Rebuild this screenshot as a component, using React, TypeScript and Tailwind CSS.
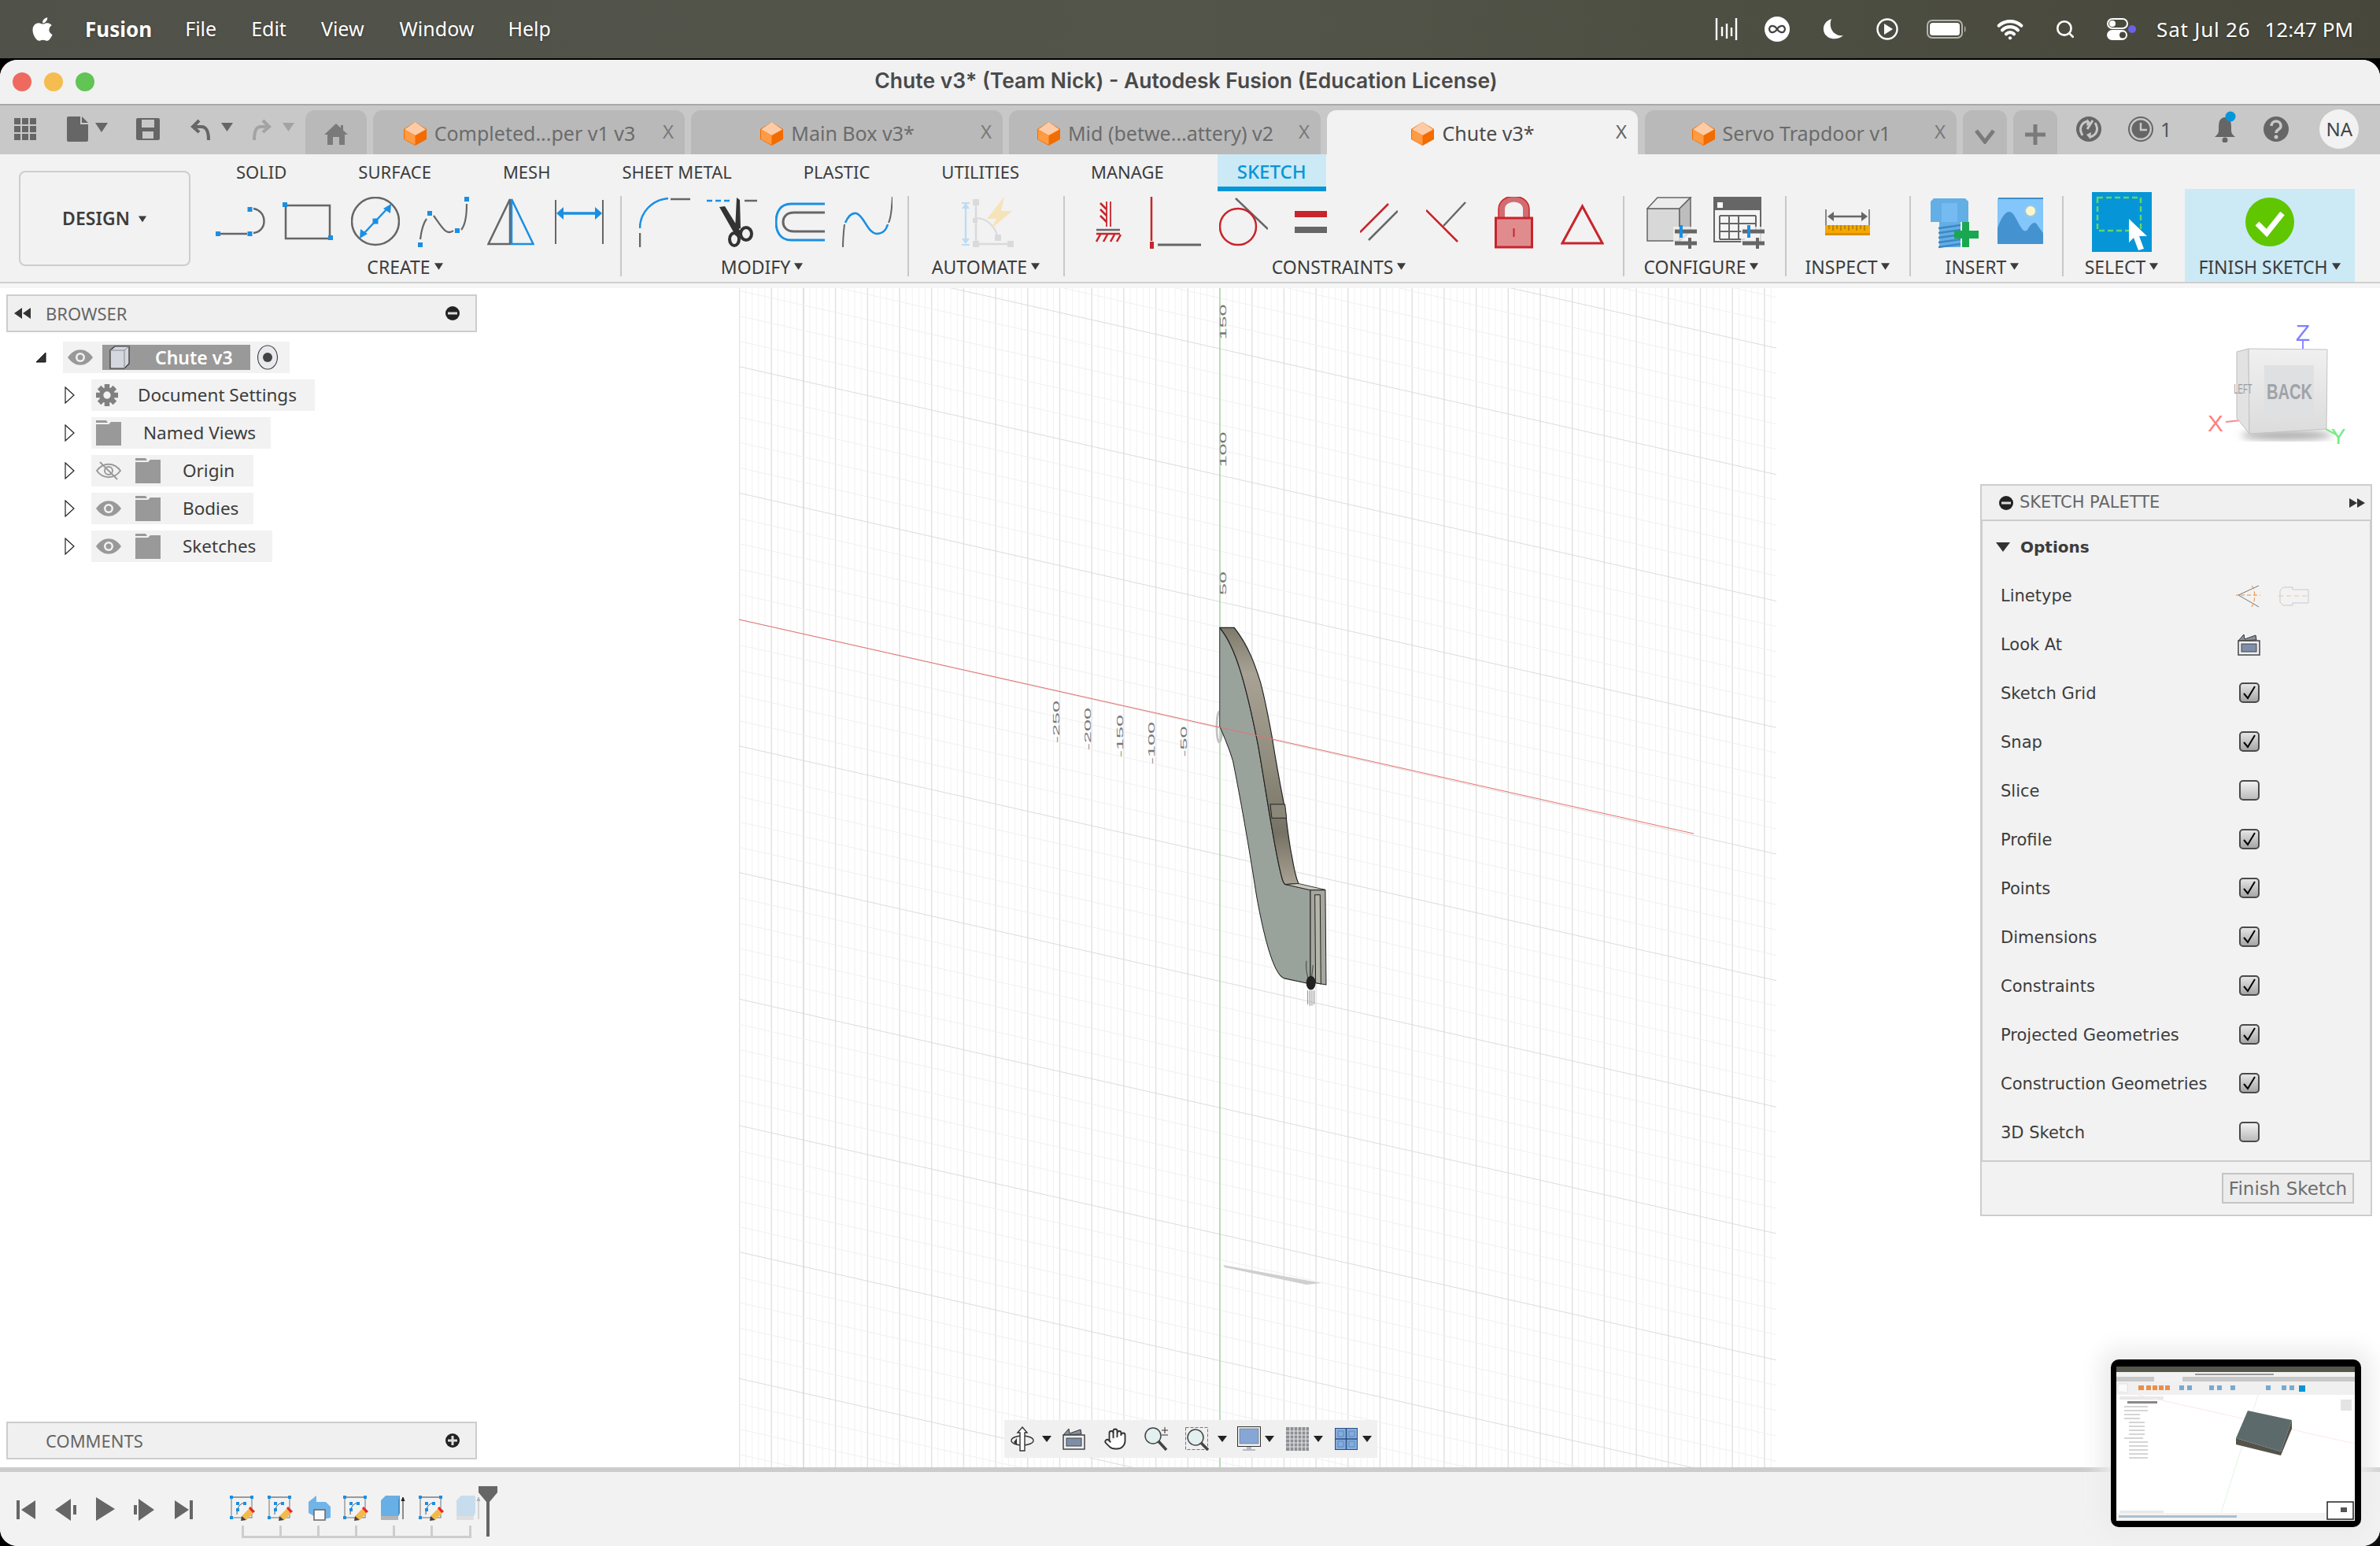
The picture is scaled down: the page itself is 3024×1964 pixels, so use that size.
import { FaApple } from 'react-icons/fa'
import { Hand, Search, Wifi } from 'lucide-react'

const BLUE = '#1a8fe3'
const GRAY = '#666666'
const RED = '#c8242b'

function Tri({ className = '' }: { className?: string }) {
  return (
    <svg width={14} height={12} viewBox="0 0 14 12" className={className}>
      <path d="M1 2H13L7 11Z" fill="#3c3c3c" />
    </svg>
  )
}

function OrangeCube() {
  return (
    <svg width={29} height={30} viewBox="0 0 29 30" className="shrink-0">
      <path d="M14.5 0L29 9V22L14.5 30L0 22V9Z" fill="#f26c00" />
      <path d="M14.5 0L28 9.5L14.5 17L1 9.5Z" fill="#fdcba6" />
      <path d="M1 10L14.5 17V29L1 22Z" fill="#ff9b42" />
    </svg>
  )
}

function Tab({ label, active, offset }: { label: string; active?: boolean; offset: string }) {
  return (
    <div className={`relative flex h-[56px] items-center justify-center gap-[10px] rounded-t-[12px] pr-[24px] pt-[4px] ${active ? 'w-[395px] bg-[#f2f2f2]' : 'w-[396px] bg-[#b9b9b9]'} ${offset}`}>
      <OrangeCube />
      <span className={`whitespace-nowrap text-[25px] ${active ? 'text-[#4a4a4a]' : 'text-[#6b6b6b]'}`}>{label}</span>
      <span className={`absolute right-[14px] top-[12px] text-[24px] leading-[30px] ${active ? 'text-[#666]' : 'text-[#7a7a7a]'}`}>X</span>
    </div>
  )
}

function MenuBar() {
  return (
    <div className="relative flex h-[74px] items-center bg-linear-to-r from-[#50524a] via-[#53554a] to-[#47473b] text-[25px] text-white [text-shadow:0_1px_3px_rgba(0,0,0,0.4)]">
      <FaApple className="ml-[38px] h-[34px] w-[32px]" />
      <span className="ml-[38px] text-[26px] font-bold">Fusion</span>
      <span className="ml-[42px]">File</span>
      <span className="ml-[44px]">Edit</span>
      <span className="ml-[44px]">View</span>
      <span className="ml-[45px]">Window</span>
      <span className="ml-[43px]">Help</span>
      <div className="ml-auto flex items-center text-[26px]">
        <svg width={30} height={30} viewBox="0 0 30 30" fill="none" stroke="#fff" strokeWidth={2.4}>
          <path d="M2 1V29M9 12V24M15 8V27M21 13V24M27 1V29" />
        </svg>
        <div className="ml-[33px] flex h-[32px] w-[32px] items-center justify-center rounded-full bg-white">
          <svg width={24} height={14} viewBox="0 0 24 14" fill="none" stroke="#444" strokeWidth={2.2}>
            <path d="M12 7C9 2 3 1 2 7C3 13 9 12 12 7C15 2 21 1 22 7C21 13 15 12 12 7Z" />
          </svg>
        </div>
        <svg width={29} height={28} viewBox="0 0 29 28" className="ml-[40px]">
          <path d="M13 1C4 4 1 12 4 19C8 27 20 29 28 22C18 24 8 14 13 1Z" fill="#fff" />
        </svg>
        <svg width={28} height={28} viewBox="0 0 28 28" fill="none" className="ml-[41px]">
          <circle cx={14} cy={14} r={12.5} stroke="#fff" strokeWidth={2.4} />
          <path d="M10 7L21 14L10 21Z" fill="#fff" />
        </svg>
        <svg width={51} height={24} viewBox="0 0 51 24" fill="none" className="ml-[36px]">
          <rect x={1} y={1} width={44} height={22} rx={6} stroke="#b4b4ab" strokeWidth={2} />
          <rect x={4} y={4} width={38} height={16} rx={3.5} fill="#fff" />
          <path d="M48 8C50 9 50 15 48 16Z" fill="#b4b4ab" />
        </svg>
        <Wifi className="ml-[37px] h-[34px] w-[36px]" strokeWidth={3} />
        <Search className="ml-[39px] h-[28px] w-[26px]" strokeWidth={2.4} />
        <svg width={37} height={28} viewBox="0 0 37 28" className="ml-[40px]">
          <rect x={1} y={1} width={25} height={12} rx={6} fill="none" stroke="#fff" strokeWidth={2} />
          <circle cx={7} cy={7} r={4} fill="#fff" />
          <rect x={0} y={15} width={26} height={13} rx={6.5} fill="#fff" />
          <circle cx={20} cy={21.5} r={4} fill="#47473b" />
          <circle cx={32} cy={14} r={5} fill="#6a62e8" />
        </svg>
        <span className="ml-[26px] tracking-[0.8px]">Sat Jul 26</span>
        <span className="ml-[18px] mr-[34px]">12:47 PM</span>
      </div>
    </div>
  )
}

function TabBar() {
  return (
    <div className="flex h-[64px] items-end border-t-2 border-[#a9a9a9] bg-[#c8c8c8]">
      <div className="flex h-[56px] w-[388px] shrink-0 items-start pt-[8px]">
        <svg width={28} height={28} viewBox="0 0 28 28" fill={GRAY} className="ml-[18px] mt-[2px]">
          <path d="M0 0H8V8H0ZM10 0H18V8H10ZM20 0H28V8H20ZM0 10H8V18H0ZM10 10H18V18H10ZM20 10H28V18H20ZM0 20H8V28H0ZM10 20H18V28H10ZM20 20H28V28H20Z" />
        </svg>
        <svg width={27} height={32} viewBox="0 0 27 32" fill={GRAY} className="ml-[39px]">
          <path d="M0 2Q0 0 2 0H17V10H27V30Q27 32 25 32H2Q0 32 0 30ZM19 0L27 8H19Z" />
        </svg>
        <svg width={16} height={12} viewBox="0 0 16 12" fill={GRAY} className="ml-[9px] mt-[8px]">
          <path d="M0 0H16L8 12Z" />
        </svg>
        <svg width={30} height={28} viewBox="0 0 30 28" fill={GRAY} className="ml-[36px] mt-[2px]">
          <path d="M2 0H28Q30 0 30 2V26Q30 28 28 28H2Q0 28 0 26V2Q0 0 2 0ZM7 2V12H23V2ZM8 17V26H22V17Z" fillRule="evenodd" />
          <path d="M11 19H19V26H16V21H14V26H11Z" fill="#c8c8c8" />
        </svg>
        <svg width={27} height={30} viewBox="0 0 27 30" fill="none" stroke={GRAY} strokeWidth={4} className="ml-[38px]">
          <path d="M12 5L4 13L12 20M4 13H15Q24 13 24 30" />
        </svg>
        <svg width={15} height={11} viewBox="0 0 15 11" fill={GRAY} className="ml-[13px] mt-[8px]">
          <path d="M0 0H15L7.5 11Z" />
        </svg>
        <svg width={25} height={30} viewBox="0 0 25 30" fill="none" stroke="#a3a3a3" strokeWidth={4} className="ml-[24px]">
          <path d="M14 5L22 13L14 20M22 13H11Q3 13 3 30" />
        </svg>
        <svg width={15} height={11} viewBox="0 0 15 11" fill="#a3a3a3" className="ml-[14px] mt-[8px]">
          <path d="M0 0H15L7.5 11Z" />
        </svg>
      </div>
      <div className="relative flex h-[56px] w-[78px] justify-center rounded-t-[12px] bg-[#b9b9b9] pt-[17px]">
        <svg width={30} height={27} viewBox="0 0 30 27" fill="#7a7a7a">
          <path d="M15 0L21 5.500V2H24V8.500L30 14H26V27H19V17H11V27H4V14H0Z" />
        </svg>
      </div>
      <Tab label="Completed...per v1 v3" offset="ml-[8px]" />
      <Tab label="Main Box v3*" offset="ml-[8px]" />
      <Tab label="Mid (betwe...attery) v2" offset="ml-[8px]" />
      <Tab label="Chute v3*" active offset="ml-[8px]" />
      <Tab label="Servo Trapdoor v1" offset="ml-[9px]" />
      <div className="ml-[8px] flex h-[56px] w-[56px] items-center justify-center rounded-t-[12px] bg-[#b9b9b9] pt-[10px]">
        <svg width={26} height={20} viewBox="0 0 26 20" fill="none" stroke="#7a7a7a" strokeWidth={5}>
          <path d="M2 3L13 17L24 3" />
        </svg>
      </div>
      <div className="ml-[8px] flex h-[56px] w-[56px] items-center justify-center rounded-t-[12px] bg-[#b9b9b9] pt-[6px]">
        <svg width={26} height={26} viewBox="0 0 26 26" fill="#7a7a7a">
          <path d="M10.500 0H15.500V10.500H26V15.500H15.500V26H10.500V15.500H0V10.500H10.500Z" />
        </svg>
      </div>
      <div className="flex h-[56px] flex-1 items-start">
        <svg width={32} height={32} viewBox="0 0 32 32" className="ml-[24px] mt-[8px]">
          <circle cx={16} cy={16} r={16} fill={GRAY} />
          <path d="M8 24C2 14 8 7 15 6M24 8C30 18 24 25 17 26" fill="none" stroke="#c8c8c8" strokeWidth={3} />
          <path d="M14 3L19 9L13 12ZM18 29L13 23L19 20Z" fill="#c8c8c8" />
          <path d="M21 5L14 16" stroke="#c8c8c8" strokeWidth={3} />
        </svg>
        <svg width={32} height={32} viewBox="0 0 32 32" fill="none" className="ml-[34px] mt-[8px]">
          <circle cx={16} cy={16} r={15} stroke={GRAY} strokeWidth={2} />
          <circle cx={16} cy={16} r={11.500} fill={GRAY} />
          <path d="M16 8V17H24" stroke="#c8c8c8" strokeWidth={2.500} />
        </svg>
        <span className="ml-[9px] mt-[8px] text-[25px] leading-[32px] text-[#555]">1</span>
        <svg width={30} height={40} viewBox="0 0 30 40" className="ml-[54px] mt-[1px]">
          <path d="M14 8C6 9 6 15 6 24C6 29 4 30 1 33H27C24 30 22 29 22 24C22 15 22 9 14 8Z" fill={GRAY} />
          <circle cx={14} cy={37} r={3.500} fill={GRAY} />
          <circle cx={21} cy={7} r={6.500} fill="#0696d7" />
        </svg>
        <svg width={32} height={32} viewBox="0 0 32 32" className="ml-[33px] mt-[8px]">
          <circle cx={16} cy={16} r={16} fill={GRAY} />
          <path d="M10 12C10 4 22 4 22 12C22 17 16 16 16 21" fill="none" stroke="#c8c8c8" strokeWidth={3.500} />
          <circle cx={16} cy={26} r={2.500} fill="#c8c8c8" />
        </svg>
        <div className="ml-[39px] mt-[-1px] flex h-[50px] w-[50px] items-center justify-center rounded-full bg-[#f2f2f2] text-[24px] text-[#444]">
          NA
        </div>
      </div>
    </div>
  )
}

function Panel({ label, width, children, shift = '' }: { label: string; width: string; children?: React.ReactNode; shift?: string }) {
  return (
    <div className={`flex shrink-0 flex-col pt-[10px] ${width}`}>
      <div className="flex h-[66px] items-start">{children}</div>
      <div className={`mt-[8px] flex h-[30px] items-center justify-center gap-[4px] text-[23px] text-[#3c3c3c] ${shift}`}>
        {label}
        <Tri className="mt-[-3px] w-[13px]" />
      </div>
    </div>
  )
}

function Divider() {
  return <div className="mt-[9px] h-[102px] w-[2px] shrink-0 bg-[#c8c8c8]" />
}

function Handle({ x, y, size = 6 }: { x: number; y: number; size?: number }) {
  return <rect x={x - size / 2} y={y - size / 2} width={size} height={size} fill={BLUE} />
}

function Sliders({ x, y }: { x: number; y: number }) {
  return (
    <g transform={`translate(${x} ${y})`}>
      <rect x={-2} y={-4} width={32} height={28} fill="#f2f2f2" opacity={0.8} />
      <path d="M0 2H28M0 17H28" stroke={GRAY} strokeWidth={5} />
      <path d="M8 -6V10" stroke={BLUE} strokeWidth={4} />
      <path d="M19 10V24" stroke={GRAY} strokeWidth={4} />
    </g>
  )
}

function CreateIcons() {
  return (
    <>
      <svg width={64} height={66} viewBox="0 0 64 66" fill="none" className="ml-[12px]">
        <path d="M6 47H40" stroke={GRAY} strokeWidth={2.500} />
        <path d="M48 15C66 18 66 44 48 46" stroke={GRAY} strokeWidth={2.500} />
        <Handle x={3} y={47} />
        <Handle x={43.500} y={47} />
        <Handle x={43.500} y={16} />
      </svg>
      <svg width={64} height={66} viewBox="0 0 64 66" fill="none" className="ml-[21px]">
        <rect x={4} y={11} width={56} height={42} stroke={GRAY} strokeWidth={2.500} />
        <Handle x={3} y={10} />
        <Handle x={61} y={52} />
      </svg>
      <svg width={62} height={66} viewBox="0 0 62 66" fill="none" className="ml-[23px]">
        <circle cx={31} cy={31} r={30} stroke={GRAY} strokeWidth={2.500} />
        <path d="M14 49L48 13" stroke={BLUE} strokeWidth={2.500} />
        <path d="M51 9L50 21L41 15ZM11 53L12 41L21 47Z" fill={BLUE} />
        <Handle x={31} y={31} size={7} />
      </svg>
      <svg width={66} height={66} viewBox="0 0 66 66" fill="none" className="ml-[23px]">
        <path d="M3 54C5 38 8 32 11 28M20 24C30 38 36 50 45 43M55 42C60 36 62 25 62 9" stroke={GRAY} strokeWidth={2.200} />
        <Handle x={3} y={61} />
        <Handle x={15} y={21} />
        <Handle x={50} y={43} />
        <Handle x={62} y={3} />
      </svg>
      <svg width={60} height={66} viewBox="0 0 60 66" fill="none" className="ml-[22px]">
        <path d="M29 3L1.500 60H29Z" stroke={GRAY} strokeWidth={2.500} />
        <path d="M31 3L58.500 60H31Z" stroke={BLUE} strokeWidth={2.500} />
      </svg>
      <svg width={62} height={66} viewBox="0 0 62 66" fill="none" className="ml-[26px]">
        <path d="M1 4V60M61 4V60" stroke={GRAY} strokeWidth={2} />
        <path d="M10 21H52" stroke={BLUE} strokeWidth={3.500} />
        <path d="M2 21L11 13V29ZM60 21L51 13V29Z" fill={BLUE} />
      </svg>
    </>
  )
}

function ModifyIcons() {
  return (
    <>
      <svg width={65} height={66} viewBox="0 0 65 66" fill="none" className="ml-[22px]">
        <path d="M40 3H65M1 46V64" stroke={GRAY} strokeWidth={2.500} />
        <path d="M1 40C1 20 16 4 37 2" stroke={BLUE} strokeWidth={2.500} />
      </svg>
      <svg width={64} height={66} viewBox="0 0 64 66" fill="none" className="ml-[21px]">
        <path d="M0 5H32" stroke={BLUE} strokeWidth={2.500} strokeDasharray="7 4" />
        <path d="M48 5H64" stroke={GRAY} strokeWidth={2.500} />
        <path d="M16 13L23 12L44 46L37 50ZM38 1L42 4L43 40L36 42Z" fill="#333" />
        <ellipse cx={35} cy={54} rx={6} ry={8} stroke="#333" strokeWidth={4} />
        <ellipse cx={50} cy={47} rx={7} ry={8} stroke="#333" strokeWidth={4} />
      </svg>
      <svg width={63} height={66} viewBox="0 0 63 66" fill="none" className="ml-[23px]">
        <path d="M63 9H20C6 9 1 20 1 32C1 44 6 55 20 55H63" stroke={BLUE} strokeWidth={3} />
        <path d="M63 20H24C14 20 10 26 10 32C10 38 14 44 24 44H63" stroke={GRAY} strokeWidth={3} />
      </svg>
      <svg width={64} height={66} viewBox="0 0 64 66" fill="none" className="ml-[22px]">
        <path d="M1 64C1 52 2 44 3 35M59 33C63 25 63 12 64 0" stroke={GRAY} strokeWidth={2} />
        <path d="M4 33C8 24 12 20 18 21C28 24 32 46 44 47C52 47 56 42 58 35" stroke={BLUE} strokeWidth={2.500} />
      </svg>
    </>
  )
}

function AutomateIcon() {
  return (
    <svg width={66} height={66} viewBox="0 0 66 66" fill="none" className="ml-[67px]">
      <path d="M5 8V58" stroke="#bcdcf3" strokeWidth={2.500} />
      <path d="M5 8L0 15H10ZM5 60L0 53H10Z" fill="#bcdcf3" />
      <path d="M0 8H10M0 61H10" stroke="#bcdcf3" strokeWidth={2} />
      <path d="M18 7V60H64" stroke="#dadada" strokeWidth={2.500} />
      <path d="M18 27C32 27 44 38 46 54" stroke="#dadada" strokeWidth={2} />
      <rect x={14} y={3} width={8} height={8} fill="#dadada" />
      <rect x={14} y={27} width={6} height={6} fill="#dadada" />
      <rect x={42} y={48} width={8} height={8} fill="#dadada" />
      <rect x={14} y={56} width={8} height={8} fill="#dadada" />
      <rect x={58} y={56} width={8} height={8} fill="#dadada" />
      <path d="M54 0L32 28H44L37 41L64 18H50Z" fill="#f6e3b9" />
    </svg>
  )
}

function ConstraintIcons() {
  return (
    <>
      <svg width={33} height={66} viewBox="0 0 33 66" fill="none" className="ml-[39px]">
        <path d="M14 6V38M19 6V38" stroke={RED} strokeWidth={1.800} />
        <path d="M6 8L14 16M6 16L14 24M6 24L14 32" stroke={RED} strokeWidth={2.500} />
        <path d="M1 42H31" stroke={GRAY} strokeWidth={2.500} />
        <path d="M1 47H31M6 48L1 57M15 48L10 57M24 48L19 57M32 48L27 57" stroke={RED} strokeWidth={2.500} />
      </svg>
      <svg width={65} height={66} viewBox="0 0 65 66" fill="none" className="ml-[36px]">
        <path d="M2 0V56" stroke={RED} strokeWidth={2.500} />
        <rect x={-1} y={57} width={6} height={9} fill={RED} />
        <path d="M10 61H65" stroke={GRAY} strokeWidth={3} />
      </svg>
      <svg width={62} height={66} viewBox="0 0 62 66" fill="none" className="ml-[23px]">
        <path d="M21 2L62 41" stroke={GRAY} strokeWidth={2.500} />
        <circle cx={24} cy={38} r={23} stroke={RED} strokeWidth={2.500} />
      </svg>
      <svg width={41} height={66} viewBox="0 0 41 66" className="ml-[34px]">
        <rect x={0} y={18} width={41} height={8} fill={RED} />
        <rect x={0} y={38} width={41} height={8} fill={GRAY} />
      </svg>
      <svg width={48} height={66} viewBox="0 0 48 66" fill="none" className="ml-[42px]">
        <path d="M36 9L0 45" stroke={RED} strokeWidth={2.500} />
        <path d="M48 18L11 55" stroke={GRAY} strokeWidth={2.500} />
      </svg>
      <svg width={51} height={66} viewBox="0 0 51 66" fill="none" className="ml-[36px]">
        <path d="M0 17L40 57" stroke={RED} strokeWidth={2.500} />
        <path d="M50 7L22 37" stroke={GRAY} strokeWidth={2.500} />
      </svg>
      <svg width={49} height={66} viewBox="0 0 49 66" fill="none" className="ml-[36px]">
        <path d="M9 27V16C9 -2 40 -2 40 16V27" stroke="#d26c70" strokeWidth={8} />
        <path d="M5 27V16C5 -6 44 -6 44 16V27" stroke={RED} strokeWidth={1.500} />
        <rect x={1.500} y={27} width={46} height={37} fill="#e08c8f" stroke={RED} strokeWidth={3} />
        <path d="M24.500 40V51" stroke={RED} strokeWidth={2} />
      </svg>
      <svg width={55} height={66} viewBox="0 0 55 66" fill="none" className="ml-[35px]">
        <path d="M27.500 12L2 59H53Z" stroke={RED} strokeWidth={3} />
      </svg>
    </>
  )
}

function ConfigureIcons() {
  return (
    <>
      <svg width={65} height={66} viewBox="0 0 65 66" fill="none" className="ml-[28px]">
        <path d="M1 15H42V56H1Z" fill="#d8d8d8" stroke={GRAY} strokeWidth={1.500} />
        <path d="M1 15L14 1H56L42 15Z" fill="#ececec" stroke={GRAY} strokeWidth={1.500} />
        <path d="M42 15L56 1V44L42 56Z" fill="#bdbdbd" stroke={GRAY} strokeWidth={1.500} />
        <Sliders x={36} y={42} />
      </svg>
      <svg width={65} height={66} viewBox="0 0 65 66" fill="none" className="ml-[20px]">
        <rect x={1} y={1} width={59} height={56} fill="#f4f4f4" stroke={GRAY} strokeWidth={2} />
        <rect x={0} y={0} width={61} height={17} fill={GRAY} />
        <rect x={5} y={7} width={7} height={7} fill="#fff" />
        <path d="M8 24H54M8 34H54M8 44H40M8 54H40M8 24V54M20 24V54M32 24V54M54 24V42" stroke={GRAY} strokeWidth={2} />
        <Sliders x={37} y={42} />
      </svg>
    </>
  )
}

function InspectIcon() {
  return (
    <svg width={57} height={66} viewBox="0 0 57 66" fill="none" className="ml-[49px]">
      <path d="M1 16V38M56 16V38" stroke={GRAY} strokeWidth={1.500} />
      <path d="M8 25H49" stroke={GRAY} strokeWidth={2.500} />
      <path d="M3 25L11 19V31ZM54 25L46 19V31Z" fill={GRAY} />
      <rect x={0} y={36} width={57} height={13} fill="#f5a800" />
      <rect x={0} y={46} width={57} height={3} fill="#d98e00" />
      <path d="M5 36V41M10 36V43M15 36V41M20 36V43M25 36V41M30 36V43M35 36V41M40 36V43M45 36V41M50 36V43" stroke="#8a6400" strokeWidth={1} />
    </svg>
  )
}

function InsertIcons() {
  return (
    <>
      <svg width={61} height={66} viewBox="0 0 61 66" className="ml-[25px]">
        <path d="M4 2H44L48 6V32H0V6Z" fill="#64aee6" />
        <rect x={14} y={8} width={20} height={24} fill="#75baf0" />
        <rect x={11} y={32} width={27} height={32} fill="#64aee6" />
        <path d="M10 40L38 36M10 46L38 42M10 52L38 48M10 58L38 54M10 64L38 60" stroke="#3d87c4" strokeWidth={2.500} />
        <path d="M40 32H49V43H61V53H49V64H40V53H30V43H40Z" fill="#19a84f" />
      </svg>
      <svg width={58} height={66} viewBox="0 0 58 66" className="ml-[24px]">
        <rect x={0} y={2} width={58} height={58} fill="#82c6fb" />
        <path d="M1 2H58" stroke="#3f8ecb" strokeWidth={2} />
        <path d="M0 60V40C6 22 14 14 20 22C28 34 32 48 38 42C44 32 48 30 52 38L58 46V60Z" fill="#4493d0" />
        <circle cx={42} cy={18} r={7} fill="#fcf7c9" stroke="#9ac8e6" strokeWidth={2} />
      </svg>
    </>
  )
}

function FusionRibbon() {
  return (
    <div className="flex h-[170px] border-b-[6px] border-[#f6f6f6] bg-[#f2f2f2]">
      <div className="w-[262px] shrink-0 border-b-2 border-[#cfcfcf] pl-[24px] pt-[21px]">
        <div className="flex h-[121px] w-[218px] items-center justify-center gap-[10px] rounded-[8px] border-2 border-[#cdcdcd] text-[23px] font-semibold text-[#3c3c3c]">
          DESIGN
          <Tri className="w-[12px]" />
        </div>
      </div>
      <div className="flex flex-1 flex-col border-b-2 border-[#cfcfcf]">
        <div className="flex h-[47px] pl-[15px] text-[22px] text-[#3c3c3c]">
          {['SOLID', 'SURFACE', 'MESH', 'SHEET METAL', 'PLASTIC', 'UTILITIES', 'MANAGE'].map(t => (
            <div key={t} className="mr-[45px] flex h-[44px] items-center px-[23px]">{t}</div>
          ))}
          <div className="flex h-[47px] w-[138px] items-center justify-center border-b-[6px] border-[#0696d7] bg-[#cce9f6] pt-[3px] text-[24px] font-medium text-[#0696d7]">SKETCH</div>
        </div>
        <div className="mt-[-3px] flex flex-1">
          <Panel label="CREATE" width="w-[526px]" shift="pr-[20px]"><CreateIcons /></Panel>
          <Divider />
          <Panel label="MODIFY" width="w-[363px]" shift="pr-[6px]"><ModifyIcons /></Panel>
          <Divider />
          <Panel label="AUTOMATE" width="w-[196px]"><AutomateIcon /></Panel>
          <Divider />
          <Panel label="CONSTRAINTS" width="w-[709px]" shift="pr-[12px]"><ConstraintIcons /></Panel>
          <Divider />
          <Panel label="CONFIGURE" width="w-[204px]" shift="pr-[8px]"><ConfigureIcons /></Panel>
          <Divider />
          <Panel label="INSPECT" width="w-[156px]"><InspectIcon /></Panel>
          <Divider />
          <Panel label="INSERT" width="w-[192px]" shift="pr-[10px]"><InsertIcons /></Panel>
          <Divider />
          <Panel label="SELECT" width="w-[154px]" shift="pr-[6px]">
            <svg width={76} height={76} viewBox="0 0 76 76" fill="none" className="ml-[36px] mt-[-6px] shrink-0">
              <rect width={76} height={76} fill="#0696d7" />
              <rect x={7} y={7} width={55} height={42} stroke="#5fd86a" strokeWidth={2.500} strokeDasharray="7 4" />
              <path d="M47 34L70 56L60 56L66 72L59 74L53 58L47 64Z" fill="#fff" />
            </svg>
          </Panel>
          <div className="flex w-[216px] shrink-0 flex-col items-center bg-[#cce9f6] pt-[11px]">
            <svg width={62} height={62} viewBox="0 0 62 62">
              <circle cx={31} cy={31} r={31} fill="#5fc600" />
              <path d="M15 33L27 45L47 20" fill="none" stroke="#fff" strokeWidth={7} />
            </svg>
            <div className="mt-[11px] flex h-[30px] items-center gap-[4px] text-[23px] text-[#3c3c3c]">
              FINISH SKETCH
              <Tri className="mt-[-3px] w-[13px]" />
            </div>
          </div>
          <div className="w-[32px] shrink-0" />
        </div>
      </div>
    </div>
  )
}

function Eye({ off }: { off?: boolean }) {
  if (off) {
    return (
      <svg width={32} height={26} viewBox="0 0 32 26" fill="none" stroke="#9a9a9a" strokeWidth={2}>
        <path d="M1 13C9 2 23 2 31 13C23 24 9 24 1 13Z" />
        <circle cx={16} cy={13} r={5} />
        <path d="M5 2L27 24" />
      </svg>
    )
  }
  return (
    <svg width={32} height={24} viewBox="0 0 32 24">
      <path d="M0 12C9 -1 23 -1 32 12C23 25 9 25 0 12Z" fill="#999" />
      <circle cx={16} cy={12} r={6} fill="#f2f2f2" />
      <circle cx={16} cy={12} r={3.500} fill="#999" />
    </svg>
  )
}

function Folder({ className = '' }: { className?: string }) {
  return (
    <svg width={32} height={32} viewBox="0 0 32 32" fill="#999" className={className}>
      <path d="M0 0H13L15 3H0ZM0 5H16L19 2H32V32H0Z" />
    </svg>
  )
}

function Gear() {
  return (
    <svg width={28} height={30} viewBox="0 0 30 30" fill="#808080">
      {[0, 45, 90, 135].map(a => (
        <rect key={a} x={11.500} y={0} width={7} height={30} transform={`rotate(${a} 15 15)`} />
      ))}
      <circle cx={15} cy={15} r={10.500} />
      <circle cx={15} cy={15} r={5} fill="#f2f2f2" />
    </svg>
  )
}

function Expander() {
  return (
    <svg width={13} height={22} viewBox="0 0 13 22" className="ml-[82px] shrink-0">
      <path d="M1 1L12 11L1 21Z" fill="#fff" stroke="#222" strokeWidth={1.200} />
    </svg>
  )
}

function TreeRow({ width, children }: { width: string; children: React.ReactNode }) {
  return (
    <div className="mb-[8px] flex h-[40px] items-center">
      <Expander />
      <div className={`ml-[21px] flex h-[40px] items-center bg-[#f2f2f2] pl-[6px] text-[22.5px] text-[#3c3c3c] ${width}`}>{children}</div>
    </div>
  )
}

function BrowserPanel() {
  return (
    <div className="absolute left-[8px] top-[8px] w-[598px]">
      <div className="flex h-[48px] items-center border-2 border-[#cdcdcd] bg-[#f0f0f0] text-[22px] text-[#666]">
        <svg width={21} height={14} viewBox="0 0 21 14" fill="#333" className="ml-[8px]">
          <path d="M10 0V14L0 7ZM21 0V14L11 7Z" />
        </svg>
        <span className="ml-[19px]">BROWSER</span>
        <svg width={18} height={18} viewBox="0 0 18 18" className="ml-auto mr-[20px]">
          <circle cx={9} cy={9} r={9} fill="#222" />
          <rect x={3} y={7.500} width={12} height={3} fill="#ddd" />
        </svg>
      </div>
      <div className="ml-[-8px] mt-[12px]">
        <div className="mb-[8px] flex h-[40px] items-center">
          <svg width={14} height={14} viewBox="0 0 14 14" className="ml-[45px]">
            <path d="M13 1V13H1Z" fill="#333" stroke="#111" />
          </svg>
          <div className="ml-[21px] flex h-[40px] w-[288px] items-center bg-[#f2f2f2] pl-[6px]">
            <Eye />
            <div className="ml-[12px] flex h-[32px] w-[188px] items-center bg-[#999] pl-[9px]">
              <svg width={26} height={30} viewBox="0 0 26 30">
                <path d="M1 6L7 1H25V23L19 29H1Z" fill="#d3d7e0" stroke="#333" strokeWidth={1.200} />
                <path d="M1 6H19V29M19 6L25 1" fill="none" stroke="#888" strokeWidth={1} />
              </svg>
              <span className="ml-[32px] text-[23px] font-semibold text-white">Chute v3</span>
            </div>
            <svg width={26} height={32} viewBox="0 0 26 32" className="ml-[9px]">
              <ellipse cx={13} cy={16} rx={12.500} ry={15} fill="#e8eaee" stroke="#444" strokeWidth={1.200} />
              <circle cx={13} cy={16} r={6} fill="#444" />
            </svg>
          </div>
        </div>
        <TreeRow width="w-[284px]">
          <Gear />
          <span className="ml-[25px] whitespace-nowrap">Document Settings</span>
        </TreeRow>
        <TreeRow width="w-[228px]">
          <Folder />
          <span className="ml-[28px] whitespace-nowrap">Named Views</span>
        </TreeRow>
        <TreeRow width="w-[206px]">
          <Eye off />
          <Folder className="ml-[18px]" />
          <span className="ml-[28px]">Origin</span>
        </TreeRow>
        <TreeRow width="w-[206px]">
          <Eye />
          <Folder className="ml-[18px]" />
          <span className="ml-[28px]">Bodies</span>
        </TreeRow>
        <TreeRow width="w-[230px]">
          <Eye />
          <Folder className="ml-[18px]" />
          <span className="ml-[28px]">Sketches</span>
        </TreeRow>
      </div>
    </div>
  )
}

function Checkbox({ checked }: { checked?: boolean }) {
  return (
    <div className={`mt-[-2px] flex h-[26px] w-[26px] items-center justify-center rounded-[5px] border-2 border-[#4a4a4a] bg-linear-to-b ${checked ? 'from-[#e6e6e6] to-[#a6a6a6]' : 'from-[#f2f2f2] to-[#bbbbbb]'}`}>
      {checked && (
        <svg width={20} height={20} viewBox="0 0 20 20" fill="none" stroke="#000" strokeWidth={2}>
          <path d="M3 11L8 17L17 2" />
        </svg>
      )}
    </div>
  )
}

function LookAt({ className = '' }: { className?: string }) {
  return (
    <svg width={29} height={28} viewBox="0 0 29 28" className={className}>
      <path d="M1 9L8 1L9 7L23 2L24 8Z" fill="#8b919b" stroke="#333" strokeWidth={1} />
      <rect x={1} y={9} width={27} height={18} fill="#eef0f3" stroke="#444" strokeWidth={1.500} />
      <rect x={5} y={13} width={19} height={10} fill="#7f8ea8" stroke="#444" strokeWidth={1} />
    </svg>
  )
}

const paletteRows = [
  { label: 'Sketch Grid', checked: true },
  { label: 'Snap', checked: true },
  { label: 'Slice', checked: false },
  { label: 'Profile', checked: true },
  { label: 'Points', checked: true },
  { label: 'Dimensions', checked: true },
  { label: 'Constraints', checked: true },
  { label: 'Projected Geometries', checked: true },
  { label: 'Construction Geometries', checked: true },
  { label: '3D Sketch', checked: false },
]

function SketchPalette() {
  return (
    <div className="absolute left-[2516px] top-[249px] w-[498px] font-['DejaVu_Sans',sans-serif] text-[#3c3c3c]">
      <div className="flex h-[47px] items-center border-2 border-[#cdcdcd] bg-[#f0f0f0] text-[21px] text-[#666]">
        <svg width={18} height={18} viewBox="0 0 18 18" className="ml-[22px]">
          <circle cx={9} cy={9} r={9} fill="#222" />
          <rect x={3} y={7.500} width={12} height={3} fill="#ddd" />
        </svg>
        <span className="ml-[8px]">SKETCH PALETTE</span>
        <svg width={20} height={12} viewBox="0 0 20 12" fill="#333" className="ml-auto mr-[7px]">
          <path d="M0 0L10 6L0 12ZM10 0L20 6L10 12Z" />
        </svg>
      </div>
      <div className="border-x-[3px] border-[#cdcdcd] bg-[#f2f2f2] text-[21px]">
        <div className="flex h-[64px] items-center pl-[17px] pt-[2px]">
          <svg width={18} height={12} viewBox="0 0 18 12" fill="#333">
            <path d="M0 0H18L9 12Z" />
          </svg>
          <span className="ml-[13px] text-[20px] font-bold">Options</span>
        </div>
        <div className="flex h-[62px] items-center pl-[23px]">
          <span className="w-[299px] pt-[2px]">Linetype</span>
          <svg width={96} height={32} viewBox="0 0 96 32" fill="none">
            <path d="M29 3L3 15L29 30" stroke="#777" strokeWidth={1} />
            <path d="M-2 15H31M20 3C25 9 25 22 20 30" stroke="#e58a3f" strokeWidth={1} strokeDasharray="5 3" />
            <path d="M60 5H72V8H92V25H72V28H60L56 24V9Z" stroke="#c9c9c9" strokeWidth={1} />
            <path d="M54 16H94" stroke="#eac5a5" strokeWidth={1} strokeDasharray="6 4" />
          </svg>
        </div>
        <div className="flex h-[62px] items-center pl-[23px]">
          <span className="w-[301px] pt-[2px]">Look At</span>
          <LookAt />
        </div>
        {paletteRows.map(row => (
          <div key={row.label} className="flex h-[62px] items-center pl-[23px]">
            <span className="w-[303px] whitespace-nowrap pt-[2px]">{row.label}</span>
            <Checkbox checked={row.checked} />
          </div>
        ))}
        <div className="h-[4px]" />
      </div>
      <div className="flex h-[71px] items-center justify-end border-2 border-[#cdcdcd] bg-[#f2f2f2] pr-[21px]">
        <div className="flex h-[39px] w-[168px] items-center justify-center border-2 border-[#c4c4c4] bg-[#ececec] pt-[2px] text-[23px] text-[#6e6e6e]">
          Finish Sketch
        </div>
      </div>
    </div>
  )
}

function Arrow() {
  return (
    <svg width={12} height={8} viewBox="0 0 12 8" fill="#222" className="shrink-0">
      <path d="M0 0H12L6 8Z" />
    </svg>
  )
}

function ViewToolbar() {
  return (
    <div className="absolute left-[1276px] top-[1438px] flex h-[48px] w-[474px] items-center bg-[#f0f0f0]">
      <svg width={30} height={32} viewBox="0 0 30 32" fill="none" className="ml-[8px] shrink-0">
        <ellipse cx={15} cy={18} rx={14} ry={6} stroke="#333" strokeWidth={1.400} />
        <path d="M15 1L21 8H18V31H12V8H9Z" fill="#fff" stroke="#333" strokeWidth={1.400} />
        <path d="M4 20L8 15V24Z" fill="#333" />
      </svg>
      <div className="ml-[10px]"><Arrow /></div>
      <LookAt className="ml-[14px] shrink-0" />
      <Hand className="ml-[23px] h-[32px] w-[30px] shrink-0 fill-white text-[#333]" strokeWidth={1.500} />
      <svg width={30} height={30} viewBox="0 0 30 30" fill="none" className="ml-[22px] shrink-0">
        <circle cx={11} cy={11} r={10} fill="#e2f0f0" stroke="#444" strokeWidth={1.500} />
        <path d="M18 18L28 29" stroke="#444" strokeWidth={3.500} />
        <path d="M22 4H30M26 0V8M22 10H30" stroke="#333" strokeWidth={1} />
      </svg>
      <svg width={30} height={30} viewBox="0 0 30 30" fill="none" className="ml-[22px] shrink-0">
        <rect x={0.500} y={0.500} width={28} height={28} stroke="#777" strokeDasharray="4 2" />
        <circle cx={13} cy={13} r={10} fill="#e2f0f0" stroke="#444" strokeWidth={1.500} />
        <path d="M20 20L29 29" stroke="#444" strokeWidth={3.500} />
      </svg>
      <div className="ml-[11px]"><Arrow /></div>
      <svg width={30} height={32} viewBox="0 0 30 32" className="ml-[13px] shrink-0">
        <rect x={0.500} y={0.500} width={29} height={25} fill="#eef0f3" stroke="#333" />
        <rect x={3} y={3} width={24} height={19} fill="#86a7d6" stroke="#555" strokeWidth={0.500} />
        <path d="M12 26H18V29H23V31H7V29H12Z" fill="#b5bac2" />
      </svg>
      <div className="ml-[5px]"><Arrow /></div>
      <svg width={29} height={30} viewBox="0 0 29 30" className="ml-[15px] shrink-0">
        <rect width={29} height={30} fill="#8d8f95" />
        <path d="M0 5H29M0 10H29M0 15H29M0 20H29M0 25H29M5 0V30M10 0V30M15 0V30M20 0V30M25 0V30" stroke="#e6e6e6" strokeWidth={1.200} />
      </svg>
      <div className="ml-[6px]"><Arrow /></div>
      <svg width={29} height={28} viewBox="0 0 29 28" className="ml-[15px] shrink-0">
        <rect x={0.500} y={0.500} width={28} height={27} fill="#85aede" stroke="#2a4f85" />
        <path d="M14.500 0V28M0 14H29" stroke="#2a4f85" strokeWidth={1.500} />
        <path d="M4 4H11V11H4ZM18 4H25V11H18ZM4 17H11V24H4ZM18 17H25V24H18Z" fill="none" stroke="#5f87bb" />
      </svg>
      <div className="ml-[6px]"><Arrow /></div>
    </div>
  )
}

function SketchStep() {
  return (
    <svg width={32} height={32} viewBox="0 0 32 32" fill="none" className="shrink-0">
      <rect x={2} y={2} width={26} height={26} stroke="#888" strokeWidth={1.200} />
      <path d="M2 2H28" stroke="#999" strokeWidth={2} />
      <path d="M9 24C9 16 12 10 19 9" stroke="#555" strokeWidth={1} />
      <path d="M0 0H4V4H0ZM26 0H30V4H26ZM0 26H4V30H0ZM8 8H12V12H8ZM17 8H21V12H17ZM8 16H12V20H8Z" fill={BLUE} />
      <path d="M26 15L32 20L21 31L15 26Z" fill="#f3b94a" />
      <path d="M26 14L32 20L29 22L24 16Z" fill="#e8242b" />
      <path d="M15 26L21 31L14 32Z" fill="#444" />
    </svg>
  )
}

function Timeline() {
  return (
    <div className="relative flex h-[100px] items-start border-t-[6px] border-[#cccccc] bg-[#f2f2f2]">
      <svg width={24} height={24} viewBox="0 0 24 24" fill={GRAY} className="ml-[21px] mt-[36px] shrink-0">
        <path d="M0 0H4V24H0ZM24 0V24L6 12Z" />
      </svg>
      <svg width={27} height={28} viewBox="0 0 27 28" fill={GRAY} className="ml-[25px] mt-[34px] shrink-0">
        <path d="M20 0V28L0 14ZM23 8H27V20H23Z" />
      </svg>
      <svg width={24} height={30} viewBox="0 0 24 30" fill={GRAY} className="ml-[25px] mt-[32px] shrink-0">
        <path d="M0 0L24 15L0 30Z" />
      </svg>
      <svg width={26} height={28} viewBox="0 0 26 28" fill={GRAY} className="ml-[24px] mt-[34px] shrink-0">
        <path d="M6 0L26 14L6 28ZM0 8H4V20H0Z" />
      </svg>
      <svg width={23} height={24} viewBox="0 0 23 24" fill={GRAY} className="ml-[26px] mt-[36px] shrink-0">
        <path d="M19 0H23V24H19ZM0 0L18 12L0 24Z" />
      </svg>
      <div className="ml-[47px] mt-[30px] flex flex-col">
        <div className="flex items-start gap-[16px]">
          <SketchStep />
          <SketchStep />
          <svg width={32} height={32} viewBox="0 0 32 32" className="shrink-0">
            <path d="M4 8L14 0V8H26L32 14V28L20 31L4 22Z" fill="#70b4e8" />
            <rect x={11} y={18} width={14} height={13} fill="#fafafa" stroke={GRAY} strokeWidth={1.500} />
          </svg>
          <SketchStep />
          <svg width={32} height={32} viewBox="0 0 32 32" className="shrink-0">
            <path d="M0 6L6 0H24V22L22 26H0Z" fill="#68afe5" />
            <path d="M22 6L24 0V22L22 26Z" fill="#4a90c8" />
            <path d="M0 26H22V31H0Z" fill="#b5b5b5" />
            <path d="M28 30V3M26 7L28 2L30 7" stroke="#222" strokeWidth={1} fill="#222" />
          </svg>
          <SketchStep />
          <svg width={32} height={32} viewBox="0 0 32 32" className="shrink-0 opacity-30">
            <path d="M0 6L6 0H24V22L22 26H0Z" fill="#68afe5" />
            <path d="M0 26H22V31H0Z" fill="#b5b5b5" />
            <path d="M28 30V3M26 7L28 2L30 7" stroke="#222" strokeWidth={1} fill="#222" />
          </svg>
        </div>
        <svg width={292} height={16} viewBox="0 0 292 16" fill="none" stroke="#cdcdcd" strokeWidth={3} className="ml-[15px] mt-[6px]">
          <path d="M1.500 0V14.500H290.500V0M49.500 0V14M97.500 0V14M145.500 0V14M193.500 0V14M241.500 0V14" />
        </svg>
      </div>
      <svg width={24} height={66} viewBox="0 0 24 66" fill={GRAY} className="absolute left-[608px] top-[18px]">
        <path d="M0 0H24V8L14 20V64H10V20L0 8Z" />
      </svg>
    </div>
  )
}

function MiniScreen() {
  return (
    <div className="absolute left-[2682px] top-[1727px] z-10 h-[213px] w-[318px] rounded-[10px] bg-black pl-[7px] pt-[9px] shadow-[0_0_28px_14px_rgba(236,236,236,1)]">
      <svg width={303} height={196} viewBox="0 0 303 196" className="blur-[0.4px]">
        <rect width={303} height={196} fill="#fff" />
        <rect width={303} height={7} fill="#55564c" />
        <rect y={7} width={303} height={6} fill="#f2f2f2" />
        <rect x={100} y={9} width={100} height={2} fill="#999" />
        <rect y={13} width={303} height={6} fill="#c8c8c8" />
        <rect x={48} y={13} width={36} height={6} fill="#f2f2f2" />
        <rect y={19} width={303} height={17} fill="#f0f0f0" />
        <rect x={2} y={22} width={12} height={11} fill="#fafafa" stroke="#ccc" strokeWidth={0.500} />
        <path d="M28 24h7v6h-7zM38 24h6v6h-6zM46 24h6v6h-6zM54 24h6v6h-6zM62 24h6v6h-6z" fill="#e98f4c" />
        <path d="M80 24h6v6h-6zM90 24h6v6h-6zM118 24h6v6h-6zM128 24h6v6h-6zM145 24h6v6h-6zM190 24h6v6h-6zM210 24h6v6h-6zM220 24h6v6h-6z" fill="#77aad1" />
        <rect x={232} y={24} width={8} height={8} fill="#0696d7" />
        <rect x={4} y={38} width={56} height={4} fill="#e8e8e8" />
        <rect x={14} y={44} width={38} height={3} fill="#888" />
        <path d="M10 50h30v2h-30zM10 55h30v2h-30zM10 60h20v2h-20zM10 65h20v2h-20zM16 70h20v2h-20zM16 75h20v2h-20zM16 80h20v2h-20zM16 85h20v2h-20zM10 90h24v2h-24zM16 95h24v2h-24zM16 100h24v2h-24zM16 105h24v2h-24zM16 110h24v2h-24zM16 115h24v2h-24z" fill="#d5d5d5" />
        <path d="M0 30L303 98" stroke="#fbe8e8" strokeWidth={1} />
        <path d="M180 36L130 196" stroke="#e3f3e3" strokeWidth={1} />
        <path d="M152 99L209 113L223 79V68L209 108L152 91Z" fill="#55524a" />
        <path d="M167 56L223 68L209 108L152 91Z" fill="#5d6a6c" />
        <rect x={285} y={42} width={14} height={14} fill="#e4e4e4" />
        <rect x={4} y={183} width={56} height={4} fill="#e8e8e8" />
        <rect y={186} width={303} height={10} fill="#f2f2f2" />
        <path d="M3 189h150v3h-150z" fill="#a9bfd1" />
        <rect x={268} y={172} width={33} height={22} fill="#fff" stroke="#222" strokeWidth={1.500} />
        <rect x={285} y={179} width={8} height={6} fill="#555" />
      </svg>
    </div>
  )
}

function Canvas() {
  const slanted: { y: number; major: boolean }[] = []
  for (let i = -50; i < 45; i++) {
    slanted.push({ y: 787 + i * 32.14, major: i % 5 === 0 })
  }
  const upright: { x: number; kind: number }[] = []
  for (let i = -75; i <= 87; i++) {
    upright.push({ x: 1550 + i * 8.14, kind: i === -65 ? 2 : i % 5 === 0 ? 1 : 0 })
  }
  return (
    <svg viewBox="0 366 3024 1498" width={3024} height={1498} className="absolute left-0 top-0">
      <defs>
        <clipPath id="gridClip">
          <rect x={939} y={366} width={1318} height={1498} />
        </clipPath>
        <linearGradient id="sideShade" x1="0" y1="0" x2="0" y2="1">
          <stop offset="0" stopColor="#7d7a6c" />
          <stop offset="0.18" stopColor="#a8a294" />
          <stop offset="0.55" stopColor="#8f8b7c" />
          <stop offset="0.8" stopColor="#767264" />
          <stop offset="1" stopColor="#a9a294" />
        </linearGradient>
        <linearGradient id="cubeFace" x1="0" y1="0" x2="0" y2="1">
          <stop offset="0" stopColor="#f0f0f0" />
          <stop offset="1" stopColor="#dcdcdc" />
        </linearGradient>
        <filter id="cubeShadow">
          <feGaussianBlur stdDeviation="5" />
        </filter>
      </defs>
      <g clipPath="url(#gridClip)">
        {upright.map(l => (
          <path key={l.x} d={`M${l.x} 366V1864`} stroke={l.kind === 2 ? '#d6d6d6' : l.kind === 1 ? '#e2e2e2' : '#f2f2f2'} strokeWidth={l.kind === 0 ? 1 : 1.500} />
        ))}
        {slanted.map(l => (
          <path key={l.y} d={`M939 ${l.y}L2257 ${l.y + 298}`} stroke={l.major ? '#dcdcdc' : '#f0f0f0'} strokeWidth={1} />
        ))}
        <path d="M1550 366V1864" stroke="#86cf86" strokeWidth={1} />
      </g>
      {[
        { t: '-250', x: 1342, y: 917 },
        { t: '-200', x: 1382, y: 926 },
        { t: '-150', x: 1423, y: 935 },
        { t: '-100', x: 1463, y: 944 },
        { t: '-50', x: 1504, y: 942 },
        { t: '50', x: 1554, y: 741 },
        { t: '100', x: 1554, y: 571 },
        { t: '150', x: 1554, y: 409 },
      ].map(a => (
        <text
          key={a.t}
          transform={`translate(${a.x + 3.5} ${a.y}) rotate(-90) scale(1 0.37)`}
          textAnchor="middle"
          fontFamily="Liberation Sans, sans-serif"
          fontSize={27}
          fill="#777777"
        >
          {a.t}
        </text>
      ))}
      <path d="M1554 1607L1679 1630L1660 1632L1556 1610Z" fill="#cfcfcf" />
      <g transform="translate(1300 760) scale(0.3333 0.35714)" strokeLinejoin="round">
        <ellipse cx={748} cy={458} rx={10} ry={54} fill="none" stroke="#c2c2c2" strokeWidth={8} />
        <path d="M749 105C810 170 850 310 895 520C920 650 945 820 975 950C985 990 990 1015 1000 1018L1095 1038V1372L995 1352C960 1340 925 1240 890 1060C860 880 830 720 800 580C785 530 765 490 749 455Z" fill="#99a39c" stroke="#222" strokeWidth={3} />
        <path d="M749 105H805C860 170 885 240 905 300C925 370 940 450 950 500C970 620 990 710 1000 760C1010 840 1020 900 1025 920C1035 975 1045 1005 1050 1015L1000 1018C990 1015 985 990 975 950C945 820 920 650 895 520C850 310 810 170 749 105Z" fill="url(#sideShade)" stroke="#222" strokeWidth={3.500} />
        <path d="M942 733L998 733L1004 782L948 782Z" fill="#8b8879" stroke="#222" strokeWidth={3} />
        <path d="M1000 1018L1050 1015L1152 1037L1095 1038Z" fill="#cbc9bf" stroke="#222" strokeWidth={2.500} />
        <path d="M1095 1038H1152L1155 1375L1095 1365Z" fill="#a5a69d" stroke="#222" strokeWidth={3} />
        <path d="M1112 1055H1132L1135 1372L1115 1368Z" fill="#b7b6ab" stroke="#222" strokeWidth={3} />
        <path d="M749 105V455" stroke="#3f6a4b" strokeWidth={3} />
        <path d="M1080 1290C1075 1320 1085 1350 1090 1365M1105 1305C1100 1340 1100 1360 1095 1390" fill="none" stroke="#444" strokeWidth={3} />
        <ellipse cx={1097} cy={1368} rx={18} ry={25} fill="#222" />
        <path d="M1085 1395V1445M1093 1395V1450M1101 1395V1450M1109 1395V1445" stroke="#888" strokeWidth={3} />
      </g>
      <path d="M939 787L2152 1059" stroke="#e87070" strokeWidth={1} />
      <ellipse cx={2905} cy={553} rx={58} ry={6} fill="#aaaaaa" filter="url(#cubeShadow)" />
      <path d="M2926 432V444" stroke="#8c8cff" strokeWidth={2} />
      <path d="M2828 536L2846 534" stroke="#ff8a8a" strokeWidth={2} />
      <path d="M2955 545L2968 552" stroke="#7fe88f" strokeWidth={2} />
      <path d="M2842 447L2857 443L2858 551L2842 531Z" fill="#e2e2e2" stroke="#bdbdbd" />
      <path d="M2857 443L2957 444L2956 545L2858 551Z" fill="url(#cubeFace)" stroke="#c2c2c2" />
      <path d="M2877 464L2940 464L2940 527L2877 529Z" fill="#dfe0e2" />
      <text x={2909} y={507} textAnchor="middle" fontFamily="Liberation Sans, sans-serif" fontWeight={700} fontSize={28} fill="#a0a3a8" transform="translate(2909 0) scale(0.72 1) translate(-2909 0)">BACK</text>
      <text x={2850} y={500} textAnchor="middle" fontFamily="Liberation Sans, sans-serif" fontSize={16} fill="#9a9a9a" transform="translate(2850 0) scale(0.6 1) translate(-2850 0)">LEFT</text>
      <text x={2926} y={433} textAnchor="middle" fontFamily="Liberation Sans, sans-serif" fontSize={30} fill="#7f7fff">Z</text>
      <text x={2815} y={548} textAnchor="middle" fontFamily="Liberation Sans, sans-serif" fontSize={30} fill="#ff7f7f">X</text>
      <text x={2971} y={564} textAnchor="middle" fontFamily="Liberation Sans, sans-serif" fontSize={28} fill="#6fee7f">Y</text>
    </svg>
  )
}

export default function App() {
  return (
    <div className="relative h-[1964px] w-[3024px] overflow-hidden bg-black font-['Noto_Sans',sans-serif]">
      <MenuBar />
      <div className="mt-[2px] flex h-[1888px] flex-col overflow-hidden rounded-[22px] bg-white">
        <div className="relative flex h-[56px] items-center justify-center bg-[#f1f1f1] pb-[2px]">
          <div className="absolute left-[16px] top-[16px] flex gap-[16px]">
            <div className="h-[24px] w-[24px] rounded-full bg-[#ee6a5f]" />
            <div className="h-[24px] w-[24px] rounded-full bg-[#f5bd4f]" />
            <div className="h-[24px] w-[24px] rounded-full bg-[#61c454]" />
          </div>
          <span className="mr-[10px] font-['Inter',sans-serif] text-[26.5px] font-semibold text-[#4a4a4a]">
            Chute v3* (Team Nick) - Autodesk Fusion (Education License)
          </span>
        </div>
        <TabBar />
        <FusionRibbon />
        <div className="relative flex-1 bg-white">
          <Canvas />
          <BrowserPanel />
          <SketchPalette />
          <ViewToolbar />
          <div className="absolute bottom-[10px] left-[8px] flex h-[48px] w-[598px] items-center border-2 border-[#cdcdcd] bg-[#f0f0f0] text-[22px] text-[#666]">
            <span className="ml-[48px]">COMMENTS</span>
            <svg width={18} height={18} viewBox="0 0 18 18" className="ml-auto mr-[20px]">
              <circle cx={9} cy={9} r={9} fill="#222" />
              <path d="M3 9H15M9 3V15" stroke="#ddd" strokeWidth={3} />
            </svg>
          </div>
        </div>
        <Timeline />
      </div>
      <MiniScreen />
    </div>
  )
}
